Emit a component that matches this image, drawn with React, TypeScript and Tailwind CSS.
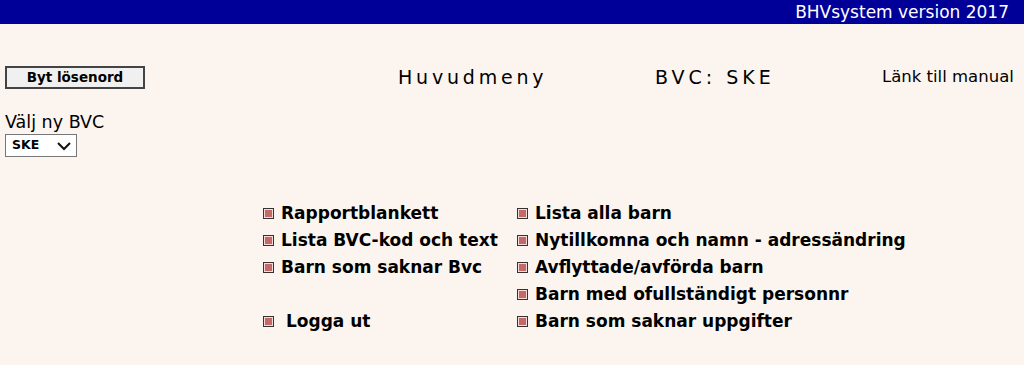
import React from "react";

const Bullet = () => (
  <span className="inline-block w-[11px] h-[11px] border border-[#333] bg-[#f4dcdc] p-[1px] mr-[7px] shrink-0">
    <span className="block w-full h-full bg-[#c46868]" />
  </span>
);

const Item = ({ text, extra }: { text: string; extra?: boolean }) => (
  <div className="flex items-center h-[27px]">
    <Bullet />
    <span className={extra ? "ml-[5px]" : ""}>{text}</span>
  </div>
);

export default function App() {
  return (
    <div
      className="w-[1024px] h-[365px] bg-[#fcf5ef] text-black overflow-hidden"
      style={{ fontFamily: '"DejaVu Sans", Verdana, sans-serif' }}
    >
      <div className="h-[24px] bg-[#000099] text-white text-[17px] leading-[24px] text-right pr-[15px]">
        BHVsystem version 2017
      </div>
      <div className="flex items-start mt-[41px]">
        <div className="w-[398px] shrink-0 pl-[5px]">
          <button className="w-[140px] h-[23px] border-[2px] border-[#444] bg-[#f0f0f0] text-[13.5px] font-bold leading-none">
            Byt lösenord
          </button>
        </div>
        <div className="w-[257px] shrink-0 text-[19px] tracking-[3.8px] leading-[24px]">Huvudmeny</div>
        <div className="w-[227px] shrink-0 text-[19px] tracking-[4px] leading-[24px]">BVC: SKE</div>
        <div className="whitespace-nowrap text-[16.5px] leading-[24px]">Länk till manual</div>
      </div>
      <div className="pl-[5px] mt-[23px] text-[17.5px] leading-[21px]">Välj ny BVC</div>
      <div className="pl-[5px] mt-[1px]">
        <div className="w-[72px] h-[23px] border border-[#777] bg-white flex items-center justify-between pl-[6px] pr-[4px]">
          <span className="text-[12.5px] font-bold">SKE</span>
          <svg width="16" height="10" viewBox="0 0 16 10">
            <path d="M2 2 L8 8 L14 2" fill="none" stroke="#111" strokeWidth="2" />
          </svg>
        </div>
      </div>
      <div className="grid grid-cols-[254px_auto] ml-[263px] mt-[43px] text-[17px] font-bold">
        <div>
          <Item text="Rapportblankett" />
          <Item text="Lista BVC-kod och text" />
          <Item text="Barn som saknar Bvc" />
          <div className="h-[27px]" />
          <Item text="Logga ut" extra />
        </div>
        <div>
          <Item text="Lista alla barn" />
          <Item text="Nytillkomna och namn - adressändring" />
          <Item text="Avflyttade/avförda barn" />
          <Item text="Barn med ofullständigt personnr" />
          <Item text="Barn som saknar uppgifter" />
        </div>
      </div>
    </div>
  );
}
